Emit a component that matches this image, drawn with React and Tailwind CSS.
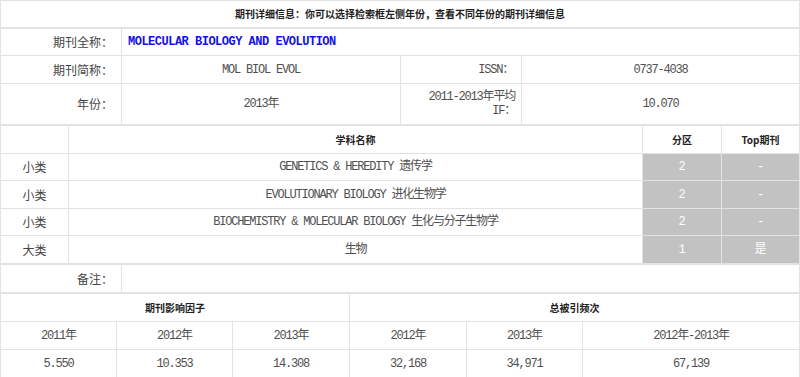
import React from 'react';

const line = 'bg-[#e3e3e3] p-px gap-px';
const cell = 'bg-white flex items-center justify-center';
const data = "font-['Liberation_Mono','Noto_Sans_CJK_SC',monospace] text-[12px] tracking-[-1.2px] text-[#505050] leading-[14px]";
const label = "font-['Noto_Sans_CJK_SC',sans-serif] text-[12px] text-[#444] leading-[14px]";
const head = "font-['Noto_Sans_CJK_SC',sans-serif] text-[10px] font-bold text-[#222] leading-[12px]";
const grey = "bg-[#c2c2c2] flex items-center justify-center font-['Liberation_Mono','Noto_Sans_CJK_SC',monospace] text-[12px] text-white";

const subjects = [
  { kind: '小类', name: 'GENETICS & HEREDITY 遗传学', zone: '2', top: '-' },
  { kind: '小类', name: 'EVOLUTIONARY BIOLOGY 进化生物学', zone: '2', top: '-' },
  { kind: '小类', name: 'BIOCHEMISTRY & MOLECULAR BIOLOGY 生化与分子生物学', zone: '2', top: '-' },
  { kind: '大类', name: '生物', zone: '1', top: '是' },
];

const years = ['2011年', '2012年', '2013年', '2012年', '2013年', '2012年-2013年'];
const values = ['5.550', '10.353', '14.308', '32,168', '34,971', '67,139'];

export default function App() {
  return (
    <div className="w-[800px] h-[377px] overflow-hidden bg-white">
      {/* title */}
      <div className={line}>
        <div className={`${cell} h-[26px] ${head}`}>
          期刊详细信息：你可以选择检索框左侧年份，查看不同年份的期刊详细信息
        </div>
      </div>

      {/* basic info */}
      <div className={`grid grid-cols-[120px_278px_120px_1fr] grid-rows-[26px_27px_40px] ${line}`}>
        <div className={`${cell} justify-end pr-2 ${label}`}>期刊全称：</div>
        <div className={`${cell} col-span-3 justify-start pl-[6px] font-['Liberation_Mono',monospace] text-[12px] font-bold tracking-[-0.5px] text-[#1010f0]`}>
          MOLECULAR BIOLOGY AND EVOLUTION
        </div>

        <div className={`${cell} justify-end pr-2 ${label}`}>期刊简称：</div>
        <div className={`${cell} ${data}`}>MOL BIOL EVOL</div>
        <div className={`${cell} justify-end pr-2 ${data}`}>ISSN：</div>
        <div className={`${cell} ${data}`}>0737-4038</div>

        <div className={`${cell} justify-end pr-2 ${label}`}>年份：</div>
        <div className={`${cell} ${data}`}>2013年</div>
        <div className={`${cell} flex-col items-end pr-[6px] ${data}`}>
          <span>2011-2013年平均</span>
          <span>IF：</span>
        </div>
        <div className={`${cell} ${data}`}>10.070</div>
      </div>

      {/* subjects */}
      <div className={`grid grid-cols-[67px_573px_78px_1fr] grid-rows-[27px_26px_27px_26px_27px] ${line}`}>
        <div className={cell}></div>
        <div className={`${cell} ${head}`}>学科名称</div>
        <div className={`${cell} ${head}`}>分区</div>
        <div className={`${cell} ${head}`}>Top期刊</div>
        {subjects.map((s, i) => (
          <React.Fragment key={i}>
            <div className={`${cell} ${label}`}>{s.kind}</div>
            <div className={`${cell} ${data}`}>{s.name}</div>
            <div className={grey}>{s.zone}</div>
            <div className={grey}>{s.top}</div>
          </React.Fragment>
        ))}
      </div>

      {/* note */}
      <div className={`grid grid-cols-[120px_1fr] grid-rows-[27px] ${line}`}>
        <div className={`${cell} justify-end pr-2 ${label}`}>备注：</div>
        <div className={cell}></div>
      </div>

      {/* impact factor & citations */}
      <div className={`grid grid-cols-[115px_115px_116px_116px_115px_1fr] grid-rows-[27px_27px_27px] ${line}`}>
        <div className={`${cell} col-span-3 ${head}`}>期刊影响因子</div>
        <div className={`${cell} col-span-3 ${head}`}>总被引频次</div>
        {years.map((y, i) => (
          <div key={'y' + i} className={`${cell} ${data}`}>{y}</div>
        ))}
        {values.map((v, i) => (
          <div key={'v' + i} className={`${cell} ${data}`}>{v}</div>
        ))}
      </div>
    </div>
  );
}
